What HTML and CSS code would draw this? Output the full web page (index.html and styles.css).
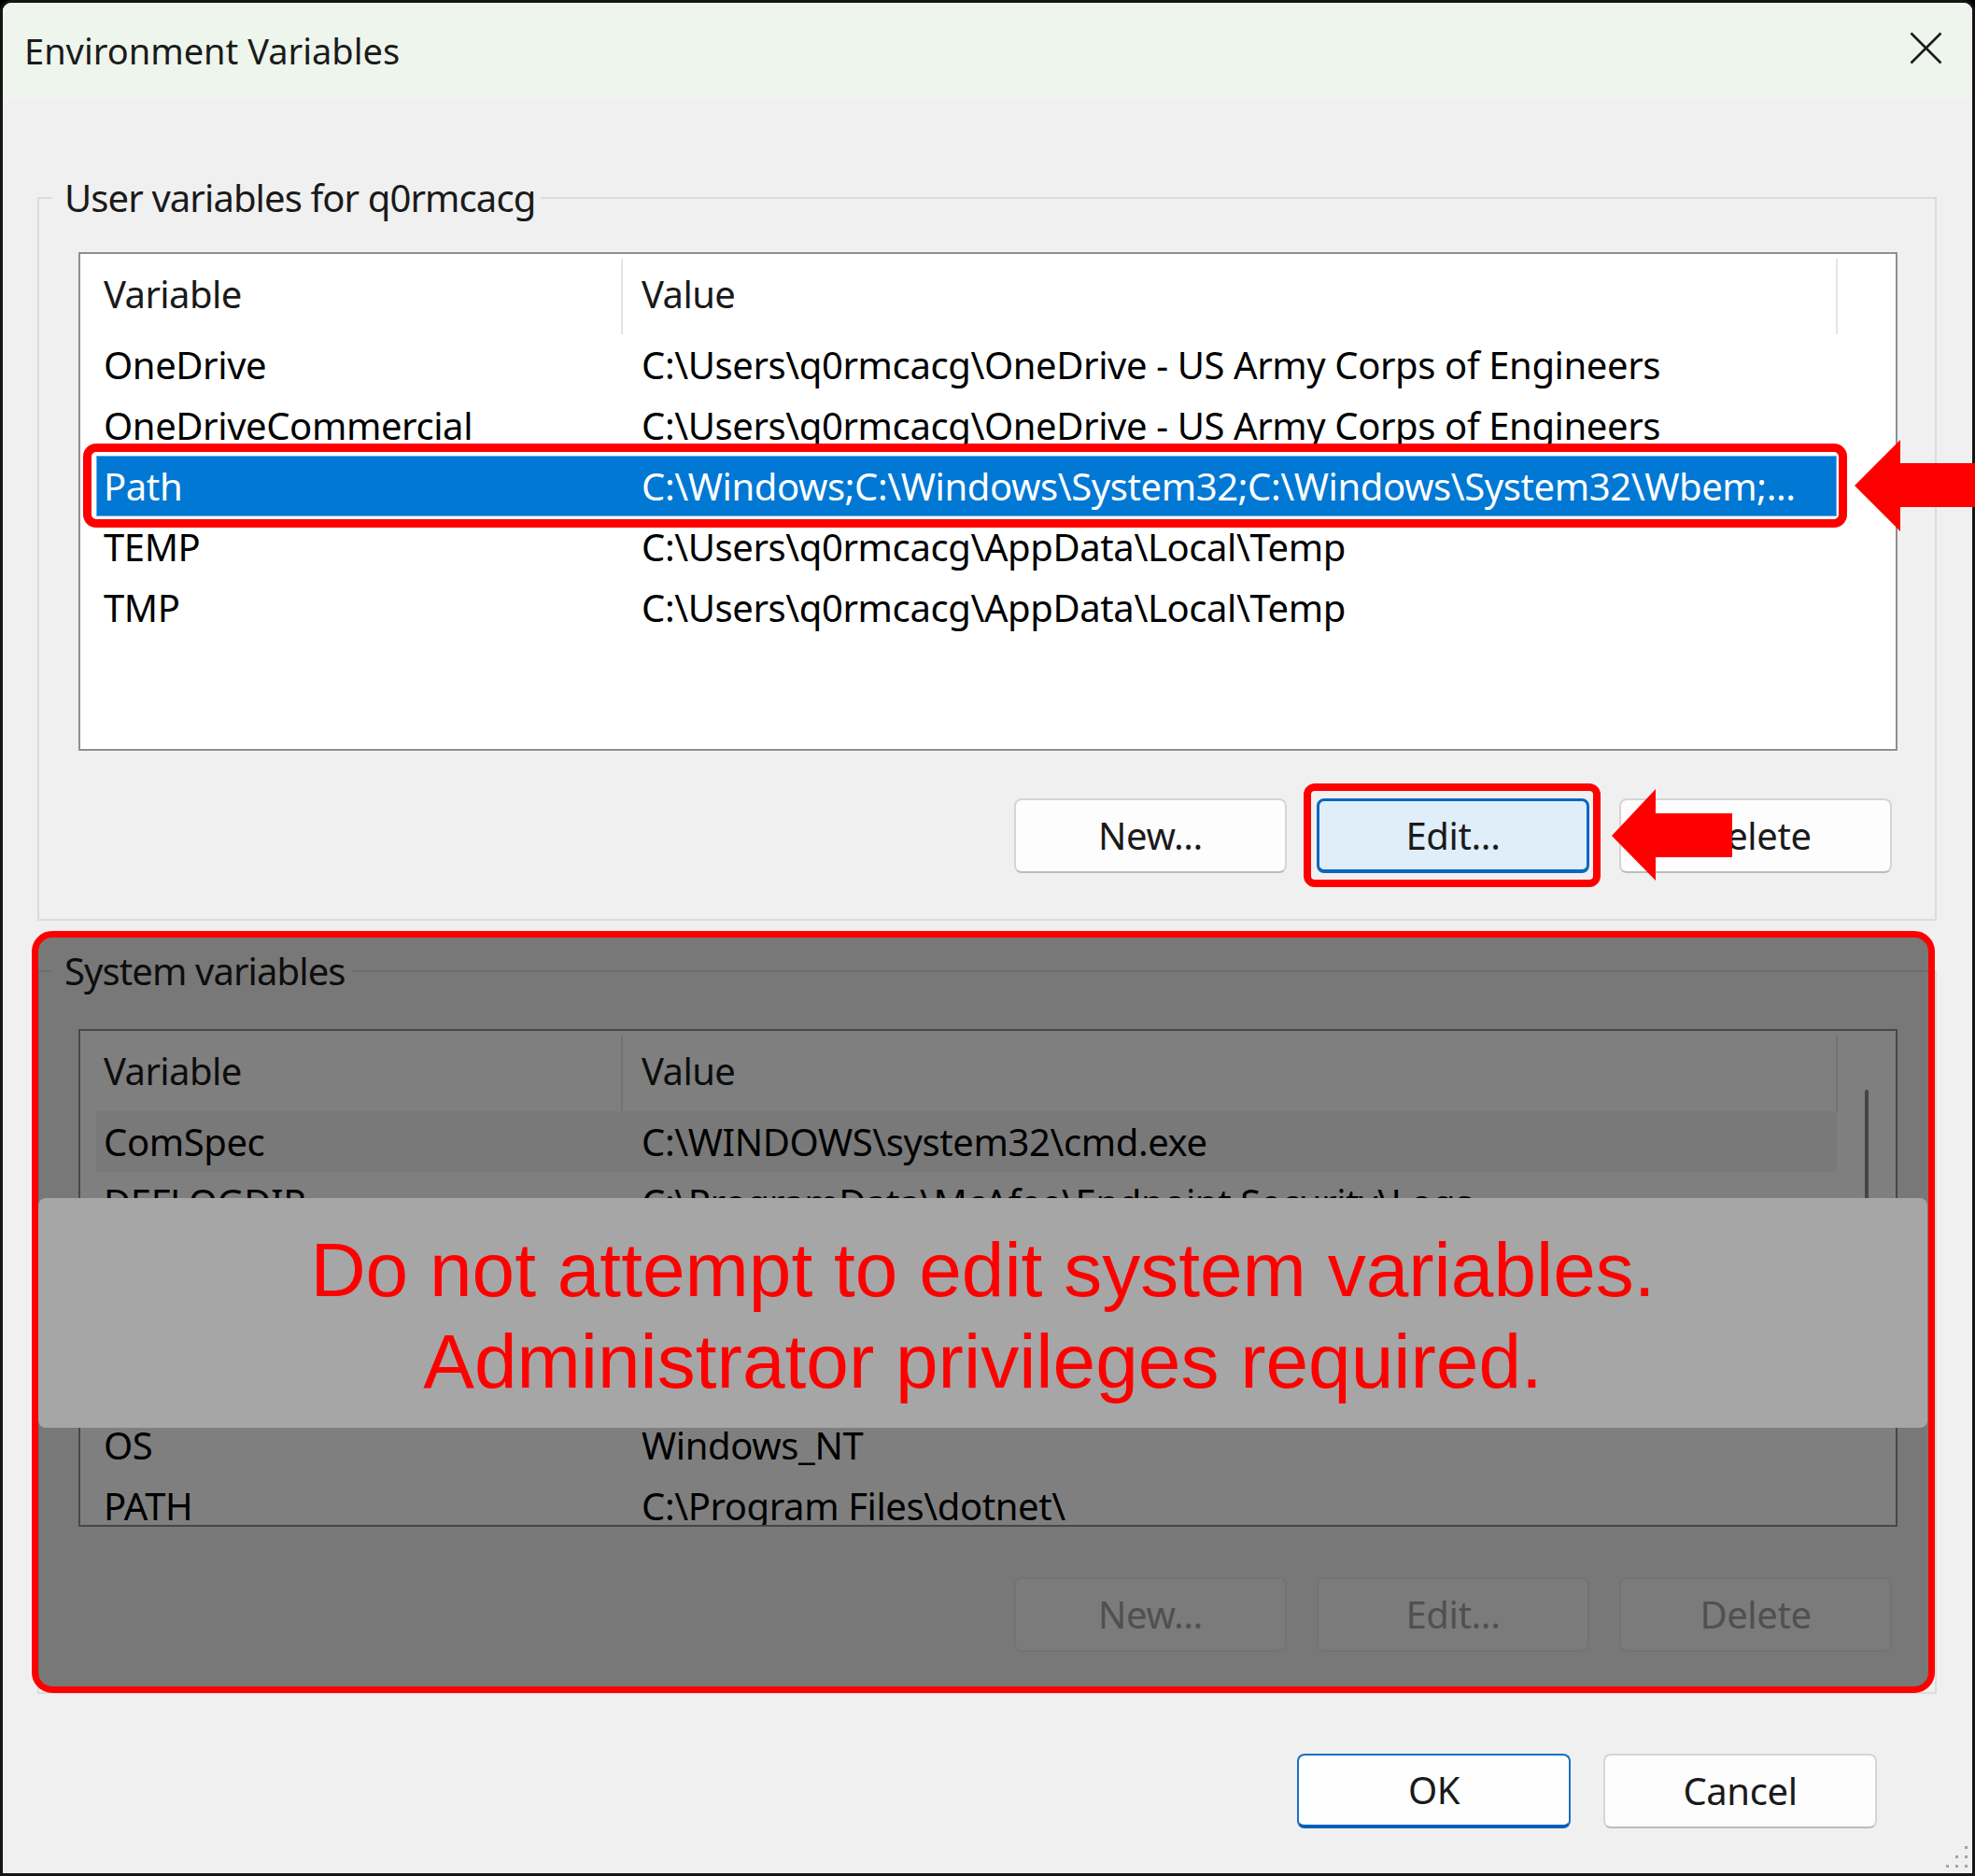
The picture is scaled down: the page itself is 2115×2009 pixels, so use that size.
FILE: index.html
```html
<!DOCTYPE html>
<html lang="en">
<head>
<meta charset="utf-8">
<title>Environment Variables</title>
<link rel="stylesheet" href="styles.css">
</head>
<body>
<div class="window">
  <div class="titlebar">
    <span class="title">Environment Variables</span>
    <svg class="close" viewBox="0 0 35 35"><path d="M1.5 1.5 L33.5 33.5 M33.5 1.5 L1.5 33.5" stroke="#1b1b1b" stroke-width="2.6" fill="none"/></svg>
  </div>
  <div class="content">
    <fieldset class="group">
      <legend>User variables for q0rmcacg</legend>
      <div class="list">
        <div class="list-body">
          <div class="list-head"><div class="hcell c1">Variable</div><div class="hcell c2">Value</div></div>
          <div class="row"><span>OneDrive</span><span>C:\Users\q0rmcacg\OneDrive - US Army Corps of Engineers</span></div>
          <div class="row"><span>OneDriveCommercial</span><span>C:\Users\q0rmcacg\OneDrive - US Army Corps of Engineers</span></div>
          <div class="row selected"><span>Path</span><span>C:\Windows;C:\Windows\System32;C:\Windows\System32\Wbem;...</span><i class="ring"></i></div>
          <div class="row"><span>TEMP</span><span>C:\Users\q0rmcacg\AppData\Local\Temp</span></div>
          <div class="row"><span>TMP</span><span>C:\Users\q0rmcacg\AppData\Local\Temp</span></div>
        </div>
        <div class="scroll"></div>
      </div>
      <div class="buttons">
        <button class="btn">New...</button>
        <button class="btn focus">Edit...<i class="ring"></i></button>
        <button class="btn">Delete</button>
      </div>
    </fieldset>

    <div class="sys-wrap">
      <fieldset class="group sys">
        <legend>System variables</legend>
        <div class="list">
          <div class="list-body">
            <div class="list-head"><div class="hcell c1">Variable</div><div class="hcell c2">Value</div></div>
            <div class="row hover"><span>ComSpec</span><span>C:\WINDOWS\system32\cmd.exe</span></div>
            <div class="row"><span>DEFLOGDIR</span><span>C:\ProgramData\McAfee\Endpoint Security\Logs</span></div>
            <div class="row"><span>DriverData</span><span>C:\Windows\System32\Drivers\DriverData</span></div>
            <div class="row"><span>NUMBER_OF_PROCESSORS</span><span>8</span></div>
            <div class="row"><span>OnlineServices</span><span>Online Services</span></div>
            <div class="row"><span>OS</span><span>Windows_NT</span></div>
            <div class="row"><span>PATH</span><span>C:\Program Files\dotnet\</span></div>
          </div>
          <div class="scroll"><div class="thumb"></div></div>
        </div>
        <div class="buttons">
          <button class="btn" disabled>New...</button>
          <button class="btn" disabled>Edit...</button>
          <button class="btn" disabled>Delete</button>
        </div>
      </fieldset>
      <div class="overlay">
        <div class="banner">Do not attempt to edit system variables.<br>Administrator privileges required.</div>
      </div>
    </div>

    <div class="dialog-buttons">
      <button class="btn default">OK</button>
      <button class="btn">Cancel</button>
    </div>
  </div>

  <svg class="arrow arrow-path" viewBox="0 0 129 98"><polygon points="0,49 49,0 49,25 129,25 129,72 49,72 49,98" fill="#ff0000"/></svg>
  <svg class="arrow arrow-edit" viewBox="0 0 129 98"><polygon points="0,50 47,0 47,26 129,26 129,73 47,73 47,98" fill="#ff0000"/></svg>

  <svg class="grip" viewBox="0 0 31 30">
    <rect x="26" y="4" width="3" height="3" fill="#a3a3a3"/>
    <rect x="26" y="14" width="3" height="3" fill="#a3a3a3"/>
    <rect x="26" y="24" width="3" height="3" fill="#a3a3a3"/>
    <rect x="16" y="14" width="3" height="3" fill="#a3a3a3"/>
    <rect x="16" y="24" width="3" height="3" fill="#a3a3a3"/>
    <rect x="6" y="24" width="3" height="3" fill="#a3a3a3"/>
  </svg>
</div>
</body>
</html>
```

FILE: styles.css
```css
html, body {
  margin: 0;
  padding: 0;
  background: #000;
}

body {
  width: 2115px;
  height: 2009px;
  overflow: hidden;
  font-family: "Noto Sans", "Open Sans", "DejaVu Sans", sans-serif;
  color: #1a1a1a;
}

.window {
  position: relative;
  box-sizing: border-box;
  width: 2115px;
  height: 2009px;
  border: 3px solid #151515;
  border-radius: 12px 12px 0 0;
  background: #f0f0f0;
}

.titlebar {
  display: flex;
  justify-content: space-between;
  height: 102px;
  padding-left: 23px;
  background: #eef5ec;
  border-radius: 9px 9px 0 0;
}

.title {
  font-size: 38px;
  line-height: 102px;
  color: #1b1b1b;
}

.close {
  width: 35px;
  height: 35px;
  margin: 31px 32px 0 0;
}

.content {
  padding: 81px 38px 0 37px;
}

.group {
  margin: 0;
  min-width: 0;
  border: 2px solid #dcdcdc;
  padding: 32px 40px 49px 0;
}

.group legend {
  margin-left: 14px;
  padding: 0 6px 0 13px;
  font-size: 40px;
  line-height: 52px;
  letter-spacing: -0.9px;
  color: #1a1a1a;
}

.group.sys {
  padding-top: 36px;
  padding-bottom: 43px;
}

.list {
  display: flex;
  box-sizing: border-box;
  height: 534px;
  margin-left: 42px;
  border: 2px solid #8f8f8f;
  background: #fff;
  overflow: hidden;
}

.sys .list {
  height: 533px;
}

.list-body {
  flex: none;
  width: 1882px;
}

.list-head {
  display: flex;
  height: 86px;
  margin-left: 17px;
}

.hcell {
  box-sizing: border-box;
  margin-top: 5px;
  height: 81px;
  line-height: 76px;
  font-size: 40px;
  letter-spacing: -0.6px;
  border-right: 2px solid #e5e5e5;
  white-space: nowrap;
}

.hcell.c1 {
  width: 564px;
  padding-left: 8px;
}

.hcell.c2 {
  width: 1301px;
  padding-left: 20px;
}

.row {
  position: relative;
  display: grid;
  grid-template-columns: 576px 1fr;
  width: 1864px;
  height: 65px;
  margin-left: 17px;
  font-size: 40px;
  line-height: 65px;
  letter-spacing: -0.4px;
  white-space: nowrap;
  color: #000;
}

.row > span {
  padding-left: 8px;
  overflow: hidden;
}

.row.selected {
  background: #0078d4;
  color: #fff;
  box-shadow: inset 0 0 0 1px #63aeea;
}

.row.hover {
  background: #f2f2f2;
}

.ring {
  position: absolute;
  border: 9px solid #ff0000;
  border-radius: 14px;
  pointer-events: none;
}

.row .ring {
  left: -14px;
  top: -13px;
  right: -11px;
  bottom: -12px;
}

.scroll {
  flex: 1;
}

.thumb {
  width: 4px;
  height: 120px;
  margin: 63px 0 0 29px;
  border-radius: 2px;
  background: #8a8a8a;
}

.buttons {
  display: flex;
  justify-content: flex-end;
  gap: 32px;
  margin: 51px 6px 0 0;
}

.sys .buttons {
  margin-top: 54px;
}

.btn {
  position: relative;
  box-sizing: border-box;
  width: 292px;
  height: 80px;
  padding: 0;
  border: 2px solid #d5d5d5;
  border-bottom-color: #bcbcbc;
  border-radius: 8px;
  background: #fdfdfd;
  font-family: inherit;
  font-size: 40px;
  line-height: 1;
  letter-spacing: -0.4px;
  color: #1a1a1a;
}

.btn.focus {
  background: #e0eef9;
  border: 3px solid #0a66c2;
  border-bottom-width: 4px;
}

.btn.focus .ring {
  left: -17px;
  top: -19px;
  right: -15px;
  bottom: -19px;
  border-width: 8px;
  border-radius: 12px;
}

.btn.default {
  border: 2px solid #1a6fc4;
  border-bottom: 4px solid #0060b8;
  background: #fefefe;
}

.btn:disabled {
  color: #a0a0a0;
  background: #f7f7f7;
  border-color: #e6e6e6;
}

.sys-wrap {
  position: relative;
  margin-top: 28px;
}

.overlay {
  position: absolute;
  left: -6px;
  top: -17px;
  right: 2px;
  bottom: 1px;
  box-sizing: border-box;
  border: 7px solid #ff0000;
  border-radius: 22px;
  background: rgba(0, 0, 0, 0.5);
}

.banner {
  box-sizing: border-box;
  height: 246px;
  margin: 279px 1px 0 0;
  padding-top: 28px;
  border-radius: 8px;
  background: #a6a6a6;
  color: #ff0000;
  font-family: "Liberation Sans", Arial, sans-serif;
  font-size: 82px;
  line-height: 98px;
  text-align: center;
}

.dialog-buttons {
  display: flex;
  justify-content: flex-end;
  gap: 35px;
  margin: 64px 64px 0 0;
}

.dialog-buttons .btn {
  width: 293px;
}

.arrow {
  position: absolute;
  width: 129px;
  height: 98px;
}

.arrow-path {
  left: 1983px;
  top: 468px;
}

.arrow-edit {
  left: 1723px;
  top: 842px;
}

.grip {
  position: absolute;
  right: 3px;
  bottom: 3px;
  width: 31px;
  height: 30px;
}
```
